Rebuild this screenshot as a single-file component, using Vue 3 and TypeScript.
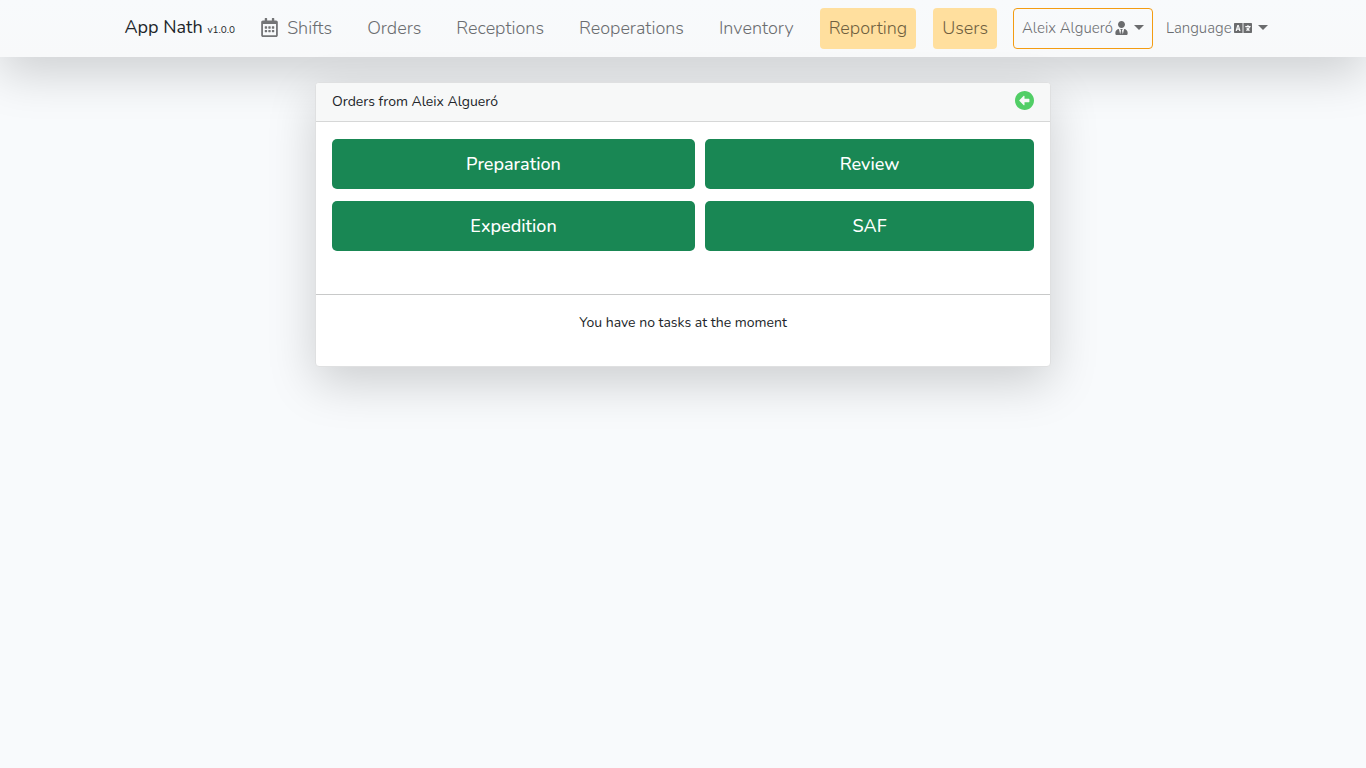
<script setup lang="ts">
interface NavItem {
  label: string
  calendar?: boolean
  highlighted?: boolean
}

const navItems: NavItem[] = [
  { label: 'Shifts', calendar: true },
  { label: 'Orders' },
  { label: 'Receptions' },
  { label: 'Reoperations' },
  { label: 'Inventory' },
  { label: 'Reporting', highlighted: true },
  { label: 'Users', highlighted: true },
]

const actions: string[] = ['Preparation', 'Review', 'Expedition', 'SAF']
</script>

<template>
  <div class="page">
    <header class="navbar">
      <nav class="container">
        <a class="brand" href="#">App Nath <small>v1.0.0</small></a>
        <ul class="links">
          <li v-for="item in navItems" :key="item.label">
            <a href="#" class="link" :class="{ highlighted: item.highlighted }">
              <svg v-if="item.calendar" class="calendar" viewBox="0 0 448 512" aria-hidden="true">
                <path d="M148 288h-40c-6.600 0-12-5.400-12-12v-40c0-6.600 5.400-12 12-12h40c6.600 0 12 5.400 12 12v40c0 6.600-5.400 12-12 12zm108-12v-40c0-6.600-5.400-12-12-12h-40c-6.600 0-12 5.400-12 12v40c0 6.600 5.400 12 12 12h40c6.600 0 12-5.400 12-12zm96 0v-40c0-6.600-5.400-12-12-12h-40c-6.600 0-12 5.400-12 12v40c0 6.600 5.400 12 12 12h40c6.600 0 12-5.400 12-12zm-96 96v-40c0-6.600-5.400-12-12-12h-40c-6.600 0-12 5.400-12 12v40c0 6.600 5.400 12 12 12h40c6.600 0 12-5.400 12-12zm-96 0v-40c0-6.600-5.400-12-12-12h-40c-6.600 0-12 5.400-12 12v40c0 6.600 5.400 12 12 12h40c6.600 0 12-5.400 12-12zm192 0v-40c0-6.600-5.400-12-12-12h-40c-6.600 0-12 5.400-12 12v40c0 6.600 5.400 12 12 12h40c6.600 0 12-5.400 12-12zm96-260v352c0 26.500-21.500 48-48 48H48c-26.500 0-48-21.500-48-48V112c0-26.500 21.500-48 48-48h48V12c0-6.600 5.400-12 12-12h40c6.600 0 12 5.400 12 12v52h128V12c0-6.600 5.400-12 12-12h40c6.600 0 12 5.400 12 12v52h48c26.500 0 48 21.500 48 48zm-48 346V160H48v298c0 3.300 2.700 6 6 6h340c3.300 0 6-2.700 6-6z" />
              </svg>
              <span>{{ item.label }}</span>
            </a>
          </li>
        </ul>
        <button type="button" class="menu outlined">
          <span>Aleix Algueró</span>
          <svg class="user" viewBox="0 0 448 512" aria-hidden="true">
            <path d="M224 256c70.700 0 128-57.300 128-128S294.700 0 224 0 96 57.300 96 128s57.300 128 128 128zm95.800 32.600L272 480l-32-136 32-56h-96l32 56-32 136-47.800-191.400C56.900 292 0 350.300 0 422.400V464c0 26.500 21.500 48 48 48h352c26.500 0 48-21.500 48-48v-41.600c0-72.100-56.900-130.400-128.200-133.800z" />
          </svg>
          <i class="caret"></i>
        </button>
        <button type="button" class="menu">
          <span>Language</span>
          <svg class="language" viewBox="0 96 640 320" preserveAspectRatio="none" aria-hidden="true">
            <path d="M152.100 236.200c-3.500-12.100-7.800-33.200-7.800-33.200h-.5s-4.300 21.100-7.800 33.200l-11.100 37.500H163zM616 96H336v320h280c13.300 0 24-10.700 24-24V120c0-13.300-10.700-24-24-24zm-24 120c0 6.600-5.400 12-12 12h-11.400c-6.900 23.600-21.700 47.400-42.700 69.900 8.400 6.400 17.100 12.500 26.100 18 5.500 3.400 7.300 10.500 4.100 16.200l-7.900 13.900c-3.400 5.900-10.900 7.800-16.700 4.300-12.600-7.800-24.500-16.100-35.400-24.900-10.900 8.700-22.700 17.100-35.400 24.900-5.800 3.500-13.300 1.600-16.700-4.300l-7.900-13.900c-3.200-5.600-1.400-12.800 4.200-16.200 9.300-5.700 18-11.700 26.100-18-7.900-8.400-14.900-17-21-25.700-4-5.700-2.200-13.600 3.700-17.100l6.500-3.900 7.300-4.300c5.400-3.200 12.400-1.700 16 3.400 5 7 10.800 14 17.400 20.900 13.500-14.200 23.800-28.900 30-43.200H412c-6.600 0-12-5.400-12-12v-16c0-6.600 5.400-12 12-12h64v-16c0-6.600 5.400-12 12-12h16c6.600 0 12 5.400 12 12v16h64c6.600 0 12 5.400 12 12zM0 120v272c0 13.300 10.700 24 24 24h280V96H24c-13.300 0-24 10.700-24 24zm58.900 216.100L116.400 167c1.700-4.900 6.200-8.100 11.400-8.100h32.500c5.100 0 9.700 3.300 11.400 8.100l57.500 169.100c2.600 7.800-3.100 15.900-11.400 15.900h-22.900a12 12 0 0 1-11.500-8.600l-9.400-31.900h-60.200l-9.100 31.800c-1.500 5.100-6.200 8.700-11.500 8.700H70.300c-8.200 0-14-8.100-11.400-15.900z" />
          </svg>
          <i class="caret"></i>
        </button>
      </nav>
    </header>

    <main class="content">
      <section class="card">
        <header class="card-header">
          <span>Orders from Aleix Algueró</span>
          <a href="#" class="back" aria-label="Back">
            <svg viewBox="8 8 496 496" aria-hidden="true">
              <path d="M256 504C119 504 8 393 8 256S119 8 256 8s248 111 248 248-111 248-248 248zm116-292H256v-70.900c0-10.700-13-16.100-20.500-8.500L121.200 247.500c-4.700 4.700-4.700 12.200 0 16.900l114.300 114.900c7.600 7.600 20.500 2.200 20.500-8.500V300h116c6.600 0 12-5.400 12-12v-64c0-6.600-5.400-12-12-12z" />
            </svg>
          </a>
        </header>
        <div class="actions">
          <button v-for="action in actions" :key="action" type="button" class="action">{{ action }}</button>
        </div>
        <p class="empty">You have no tasks at the moment</p>
      </section>
    </main>
  </div>
</template>

<style>
body {
  margin: 0;
  background: #f8fafc;
}
</style>

<style scoped>
.page {
  min-height: 100vh;
  font-family: Nunito, Lato, "Open Sans", sans-serif;
  font-size: 14px;
  line-height: 22px;
  color: #212529;
}

.navbar {
  padding: 8px 12px;
  background: linear-gradient(#f8fafc, #f8f9fa);
  box-shadow: 0 16px 48px rgba(0, 0, 0, 0.175);
}

.container {
  display: flex;
  align-items: center;
  max-width: 1143px;
  margin: 0 auto;
  padding-left: 26px;
}

.brand {
  margin-right: 17px;
  font-size: 18px;
  color: #212529;
  text-decoration: none;
  white-space: nowrap;
}

.brand small {
  font-size: 10px;
}

.links {
  display: flex;
  gap: 17px;
  margin: 0 16px 0 0;
  padding: 0;
  list-style: none;
}

.link {
  display: flex;
  align-items: center;
  gap: 9px;
  height: 41px;
  padding: 0 9px 2px;
  border-radius: 4px;
  font-size: 18px;
  font-weight: 300;
  color: #6b6d70;
  text-decoration: none;
  box-sizing: border-box;
}

.link.highlighted {
  background: #ffdf9e;
  color: #705f40;
}

.calendar {
  width: 17px;
  height: 19px;
  fill: #737476;
}

.menu {
  display: flex;
  align-items: center;
  height: 41px;
  padding: 0 8px 2px;
  border: 1px solid transparent;
  border-radius: 4px;
  background: transparent;
  font-family: inherit;
  font-size: 15px;
  font-weight: 300;
  color: #6b6d70;
  white-space: nowrap;
}

.menu.outlined {
  margin-right: 4px;
  border-color: #f39c12;
}

.menu svg {
  margin: 0 6px 0 2px;
  fill: #6b6c6e;
}

.user {
  width: 13px;
  height: 14px;
}

.language {
  width: 18px;
  height: 10px;
}

.caret {
  border-top: 5px solid #6b6c6e;
  border-right: 5px solid transparent;
  border-left: 5px solid transparent;
}

.content {
  display: flex;
  justify-content: center;
  padding: 25px 12px;
}

.card {
  width: 100%;
  max-width: 736px;
  box-sizing: border-box;
  border: 1px solid #dfe0e1;
  border-radius: 4px;
  background: #ffffff;
  box-shadow: 0 16px 48px rgba(0, 0, 0, 0.175);
}

.card-header {
  display: flex;
  align-items: center;
  justify-content: space-between;
  height: 38px;
  padding: 0 16px;
  border-bottom: 1px solid #d6d7d7;
  border-radius: 3px 3px 0 0;
  background: #f7f8f8;
}

.back {
  display: flex;
  padding-bottom: 4px;
}

.back svg {
  width: 19px;
  height: 19px;
  fill: #51ce66;
}

.actions {
  display: grid;
  grid-template-columns: 362fr 328fr;
  gap: 12px 10px;
  padding: 17px 16px 43px;
  border-bottom: 1px solid #c8c9c9;
}

.action {
  height: 50px;
  padding: 0 16px;
  border: 0;
  border-radius: 5px;
  background: #198754;
  font-family: inherit;
  font-size: 18px;
  font-weight: 500;
  color: #ffffff;
}

.empty {
  margin: 0;
  padding: 17px 16px 32px;
  text-align: center;
}
</style>
